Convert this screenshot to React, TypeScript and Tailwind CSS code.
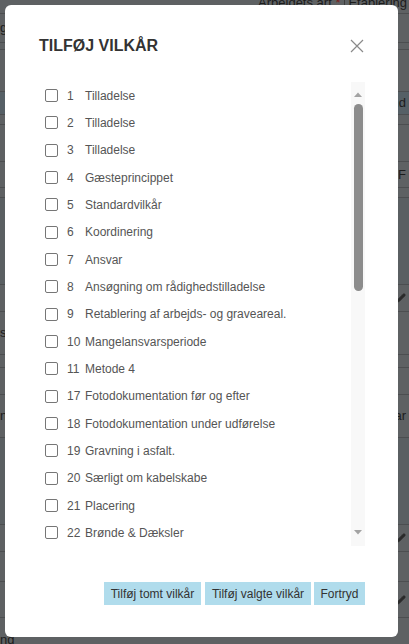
import { useState } from 'react';
import { Pencil } from 'lucide-react';

interface Term {
  id: number;
  title: string;
}

interface BgRow {
  h: number;
  dark?: boolean;
  band?: boolean;
  left?: string;
  right?: string;
  pencil?: boolean;
}

const terms: Term[] = [
  { id: 1, title: 'Tilladelse' },
  { id: 2, title: 'Tilladelse' },
  { id: 3, title: 'Tilladelse' },
  { id: 4, title: 'Gæsteprincippet' },
  { id: 5, title: 'Standardvilkår' },
  { id: 6, title: 'Koordinering' },
  { id: 7, title: 'Ansvar' },
  { id: 8, title: 'Ansøgning om rådighedstilladelse' },
  { id: 9, title: 'Retablering af arbejds- og graveareal.' },
  { id: 10, title: 'Mangelansvarsperiode' },
  { id: 11, title: 'Metode 4' },
  { id: 17, title: 'Fotodokumentation før og efter' },
  { id: 18, title: 'Fotodokumentation under udførelse' },
  { id: 19, title: 'Gravning i asfalt.' },
  { id: 20, title: 'Særligt om kabelskabe' },
  { id: 21, title: 'Placering' },
  { id: 22, title: 'Brønde & Dæksler' },
  { id: 23, title: 'Træer' },
  { id: 24, title: 'Afspærring' },
];

// rows of the page that sits dimmed behind the dialog
const bgRows: BgRow[] = [
  { h: 29, left: 'g' },
  { h: 7 },
  { h: 42 },
  { h: 23, band: true, right: 'nd' },
  { h: 10 },
  { h: 37 },
  { h: 26, right: 'F' },
  { h: 10 },
  { h: 87, dark: true },
  { h: 27, pencil: true },
  { h: 43, left: 's' },
  { h: 13 },
  { h: 27 },
  { h: 43, left: 'ne', right: 'ar' },
  { h: 87, dark: true },
  { h: 27, pencil: true },
  { h: 30 },
  { h: 36, pencil: true },
];

const BackgroundPage = () => (
  <div className="flex flex-col h-full text-[13px] text-[#1c1c1c]">
    <div className="h-[14px] border-b border-[#4c4e50] flex justify-end items-start pr-[2px] leading-[13px] overflow-hidden">
      <span className="-mt-[4px] whitespace-nowrap">
        Arbejdets art <span className="text-[#7a1f1f]">*</span>
        <span className="ml-[4px] border-l border-[#3d3d3d] pl-[3px]">Etablering</span>
      </span>
    </div>
    {bgRows.map((row, i) => (
      <div
        key={i}
        style={{ height: row.h }}
        className={`shrink-0 border-b border-[#4c4e50] flex justify-between items-center pr-[3px] ${
          row.dark ? 'bg-[#5a5f62]' : row.band ? 'bg-[#566066]' : ''
        }`}
      >
        <span>{row.left}</span>
        {row.pencil ? <Pencil size={10} color="#2a2a2a" fill="#2a2a2a" /> : <span>{row.right}</span>}
      </div>
    ))}
    <div className="flex-1 flex items-end">
      <span className="leading-[8px]">ng</span>
    </div>
  </div>
);

const ScrollTrack = () => (
  <div className="w-[14px] h-full bg-[#f8f8f8] flex flex-col items-center shrink-0">
    <svg width="8" height="5" viewBox="0 0 8 5" className="mt-[10px]">
      <polygon points="0,5 4,0.5 8,5" fill="#a3a3a3" />
    </svg>
    <div className="w-[9px] h-[187px] mt-[7px] rounded-full bg-[#8c8c8c]" />
    <div className="flex-1" />
    <svg width="8" height="5" viewBox="0 0 8 5" className="mb-[11px]">
      <polygon points="0,0 8,0 4,4.5" fill="#a3a3a3" />
    </svg>
  </div>
);

export default function App() {
  const [checked, setChecked] = useState<Record<number, boolean>>({});

  const toggle = (id: number) => setChecked((prev) => ({ ...prev, [id]: !prev[id] }));

  return (
    <div
      className="relative w-[409px] h-[644px] overflow-hidden bg-[#5e6163]"
      style={{ fontFamily: '"Liberation Sans", Arial, sans-serif' }}
    >
      <BackgroundPage />

      {/* Dialog */}
      <div className="absolute left-[5px] top-[5px] w-[393px] h-[632px] bg-white rounded-[6px] flex flex-col pt-[31px] pl-[34px] pr-[33px] pb-[32px]">
        <div className="flex items-center justify-between h-[20px]">
          <h2 className="text-[16px] font-bold text-[#333333] leading-[20px]">TILFØJ VILKÅR</h2>
          <button className="w-[14px] h-[14px] flex items-center justify-center mr-[1px]" aria-label="Luk">
            <svg width="14" height="14" viewBox="0 0 14 14">
              <path d="M1 1 L13 13 M13 1 L1 13" stroke="#8a8a8a" strokeWidth="1.2" fill="none" />
            </svg>
          </button>
        </div>

        <div className="mt-[26px] h-[464px] flex">
          <div className="flex-1 overflow-hidden">
            {terms.map((term) => (
              <label
                key={`${term.id}-${term.title}`}
                className="h-[27.33px] flex items-center pl-[6px] text-[12px] text-[#555555] cursor-pointer"
              >
                <input
                  type="checkbox"
                  checked={!!checked[term.id]}
                  onChange={() => toggle(term.id)}
                  className="appearance-none w-[13px] h-[13px] border border-[#767676] rounded-[2px] bg-white shrink-0 checked:bg-[#0075ff] checked:border-[#0075ff]"
                />
                <span className="ml-[9px] inline-block min-w-[14px] mr-[4px]">{term.id}</span>
                <span className="whitespace-nowrap">{term.title}</span>
              </label>
            ))}
          </div>
          <ScrollTrack />
        </div>

        <div className="mt-[36px] flex justify-end">
          <button className="h-[23px] w-[97px] bg-[#b0dcec] text-[12px] text-[#333333] whitespace-nowrap">
            Tilføj tomt vilkår
          </button>
          <button className="h-[23px] w-[106px] ml-[4px] bg-[#b0dcec] text-[12px] text-[#333333] whitespace-nowrap">
            Tilføj valgte vilkår
          </button>
          <button className="h-[23px] w-[51px] ml-[3px] bg-[#b0dcec] text-[12px] text-[#333333] whitespace-nowrap">
            Fortryd
          </button>
        </div>
      </div>
    </div>
  );
}
